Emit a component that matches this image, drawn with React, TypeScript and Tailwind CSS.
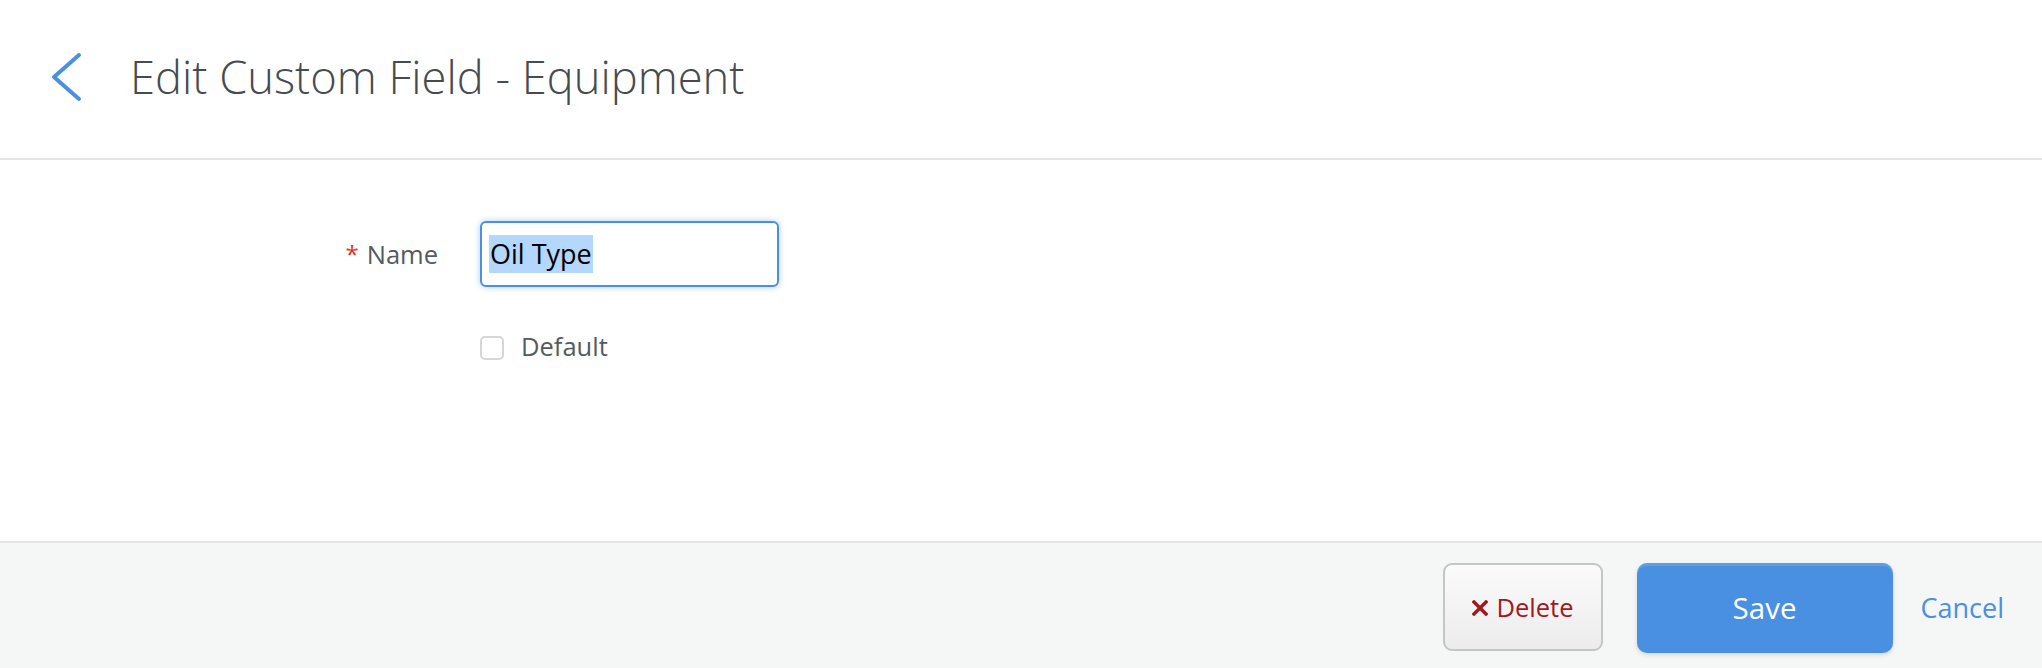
import React from "react";

export default function App() {
  return (
    <div className="w-[2042px] h-[668px] bg-white flex flex-col overflow-hidden font-['Open_Sans',sans-serif]">
      {/* Header */}
      <header className="h-[160px] shrink-0 border-b-2 border-[#e5e6e6] flex items-center pl-[51px]">
        <svg width="32" height="52" viewBox="0 0 32 52" className="shrink-0 mt-[-4px]">
          <polyline points="28,4 3,26 28,48" fill="none" stroke="#4a90e2" strokeWidth="4" strokeLinecap="round" strokeLinejoin="round" />
        </svg>
        <h1 className="ml-[47px] text-[45.3px] font-light leading-none text-[#464b50] mt-[-4px]">
          Edit Custom Field - Equipment
        </h1>
      </header>

      {/* Body */}
      <main className="h-[381px] shrink-0 pt-[61px]">
        <div className="grid grid-cols-[438px_300px] gap-x-[42px] gap-y-[49px] items-center">
          <label className="justify-self-end flex items-center text-[25.5px] text-[#555a5f]">
            <span className="text-[#e0321f] mr-[8px] text-[24px]">*</span>
            <span>Name</span>
          </label>
          <div className="h-[66px] w-[299px] rounded-[6px] border-2 border-[#4a90e2] shadow-[0_0_6px_rgba(74,144,226,0.45)] flex items-center pl-[7px] bg-white">
            <span className="bg-[#b3d7fe] text-black text-[27px] leading-[38px] px-[1px]">Oil Type</span>
          </div>
          <div />
          <label className="flex items-center">
            <span className="w-[24px] h-[24px] rounded-[5px] border-2 border-[#d6d6d6] bg-white shrink-0" />
            <span className="ml-[17px] text-[25.5px] text-[#555a5f] leading-none mt-[-2px]">Default</span>
          </label>
        </div>
      </main>

      {/* Footer */}
      <footer className="flex-1 border-t-2 border-[#e3e4e4] bg-[#f5f6f6] flex items-start justify-end pt-[20px] pr-[38px]">
        <button className="w-[160px] h-[88px] rounded-[9px] border-2 border-[#c5c5c5] bg-gradient-to-b from-[#fbfbfb] to-[#ececec] flex items-center justify-center text-[#a1191f] text-[25.5px]">
          <svg width="16" height="16" viewBox="0 0 16 16" className="mr-[9px] mt-[2px]">
            <path d="M2 2 L14 14 M14 2 L2 14" stroke="#a1191f" strokeWidth="3.4" strokeLinecap="square" />
          </svg>
          <span>Delete</span>
        </button>
        <button className="ml-[34px] w-[256px] h-[90px] rounded-[10px] bg-[#4a90e2] shadow-[inset_0_3px_0_rgba(255,255,255,0.12),0_2px_5px_rgba(0,0,0,0.12)] text-white text-[29.5px] flex items-center justify-center">
          Save
        </button>
        <a className="ml-[28px] h-[90px] flex items-center text-[#4a90e2] text-[27px] cursor-pointer">Cancel</a>
      </footer>
    </div>
  );
}
